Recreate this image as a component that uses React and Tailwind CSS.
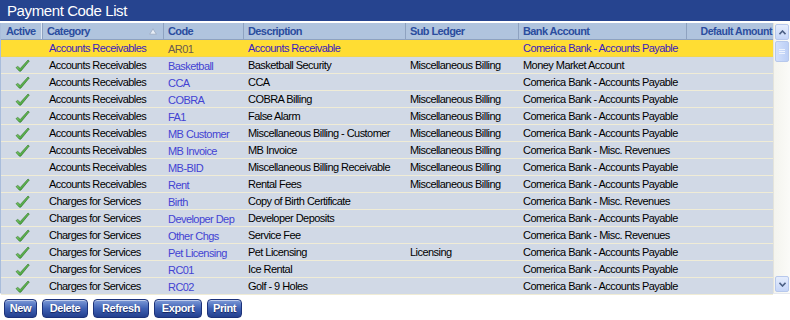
import React from "react";

const AR = "Accounts Receivables";
const CS = "Charges for Services";
const AP = "Comerica Bank - Accounts Payable";
const MR = "Comerica Bank - Misc. Revenues";
const MB = "Miscellaneous Billing";

const rows = [
  [false, AR, "AR01", "Accounts Receivable", "", AP],
  [true, AR, "Basketball", "Basketball Security", MB, "Money Market Account"],
  [true, AR, "CCA", "CCA", "", AP],
  [true, AR, "COBRA", "COBRA Billing", MB, AP],
  [true, AR, "FA1", "False Alarm", MB, AP],
  [true, AR, "MB Customer", "Miscellaneous Billing - Customer", MB, AP],
  [true, AR, "MB Invoice", "MB Invoice", MB, MR],
  [false, AR, "MB-BID", "Miscellaneous Billing Receivable", MB, AP],
  [true, AR, "Rent", "Rental Fees", MB, AP],
  [true, CS, "Birth", "Copy of Birth Certificate", "", MR],
  [true, CS, "Developer Dep", "Developer Deposits", "", AP],
  [true, CS, "Other Chgs", "Service Fee", "", MR],
  [true, CS, "Pet Licensing", "Pet Licensing", "Licensing", AP],
  [true, CS, "RC01", "Ice Rental", "", AP],
  [true, CS, "RC02", "Golf - 9 Holes", "", AP],
];

const cols = "grid-cols-[42px_121px_80px_162px_113px_168px_86px]";

function Check() {
  return (
    <svg width="15" height="13" viewBox="0 0 15 13">
      <defs>
        <linearGradient id="cg" x1="0" y1="0" x2="1" y2="1">
          <stop offset="0" stopColor="#a6e88a" />
          <stop offset="1" stopColor="#1f8a1f" />
        </linearGradient>
      </defs>
      <path
        d="M1 8.6 L2.8 7.4 L5.2 9.6 L13 1 L14.3 2 L5.8 12.2 L4.4 12.2 Z"
        fill="url(#cg)"
        stroke="#2d6e22"
        strokeWidth="0.6"
        strokeLinejoin="round"
      />
    </svg>
  );
}

function Btn({ children, w }) {
  return (
    <button
      className={`h-[19px] ${w} rounded-[4px] border border-[#1c327a] bg-gradient-to-b from-[#7e9ad8] via-[#3f61b4] to-[#233f8e] text-white font-bold text-[11px] tracking-[-0.4px] leading-none shadow-[inset_0_1px_0_rgba(255,255,255,0.5)] [text-shadow:0_1px_1px_rgba(0,0,40,0.6)]`}
      style={{ fontFamily: '"Liberation Sans", Arial, sans-serif' }}
    >
      {children}
    </button>
  );
}

export default function App() {
  return (
    <div
      className="w-[790px] h-[320px] bg-white text-[11px] tracking-[-0.55px] text-black"
      style={{ fontFamily: '"Liberation Sans", Arial, sans-serif' }}
    >
      <div className="h-[21px] bg-[#26448f] text-white text-[15px] tracking-[-0.4px] leading-[21px] pl-[7px]">
        Payment Code List
      </div>
      <div className="h-[2px] bg-white" />
      <div className="flex h-[270px] border-l border-[#a9bddb]">
        <div className="w-[772px] flex flex-col">
          <div className={`grid ${cols} h-[17px] bg-[#b0c4de] text-[#2b4d9e] font-bold tracking-[-0.6px] border-b border-[#8ea2c0]`}>
            <div className="pl-[5px] leading-[16px] border-r border-[#8ea2c0] shadow-[inset_-1px_0_0_#dfe8f3]">Active</div>
            <div className="pl-[4px] pr-[6px] leading-[16px] border-r border-[#8ea2c0] flex justify-between items-center">
              <span>Category</span>
              <svg width="8" height="7" viewBox="0 0 8 7">
                <path d="M4 0.8 L7.3 6.2 L0.7 6.2 Z" fill="#e8eef7" stroke="#9aa9c0" strokeWidth="0.8" />
              </svg>
            </div>
            <div className="pl-[4px] leading-[16px] border-r border-[#8ea2c0]">Code</div>
            <div className="pl-[4px] leading-[16px] border-r border-[#8ea2c0]">Description</div>
            <div className="pl-[4px] leading-[16px] border-r border-[#8ea2c0]">Sub Ledger</div>
            <div className="pl-[4px] leading-[16px] border-r border-[#8ea2c0]">Bank Account</div>
            <div className="leading-[16px] text-right whitespace-nowrap text-[10.5px] tracking-[-0.45px] pr-[1px]">Default Amount</div>
          </div>
          {rows.map((r, i) => {
            const sel = i === 0;
            return (
              <div
                key={i}
                className={`grid ${cols} h-[17px] leading-[16px] border-b ${
                  sel ? "bg-[#ffdd33] text-[#3a1cbf] border-[#f3d64a]" : "bg-[#d1d9e6] border-[#f0ecd6]"
                }`}
              >
                <div className="flex items-center justify-center pt-[1px]">{r[0] && <Check />}</div>
                <div className="pl-[6px] whitespace-nowrap overflow-hidden">{r[1]}</div>
                <div className={`pl-[4px] pt-[1px] whitespace-nowrap overflow-hidden ${sel ? "text-[#6b5a50]" : "text-[#4343d3]"}`}>{r[2]}</div>
                <div className="pl-[4px] whitespace-nowrap overflow-hidden">{r[3]}</div>
                <div className="pl-[4px] whitespace-nowrap overflow-hidden">{r[4]}</div>
                <div className="pl-[4px] whitespace-nowrap overflow-hidden">{r[5]}</div>
                <div />
              </div>
            );
          })}
        </div>
        <div className="w-[17px] flex flex-col bg-gradient-to-r from-[#f4f4ee] to-[#fbfbf8] border-l border-[#e4e4dc] pl-[1px] pr-[1px] pt-[1px]">
          <div className="h-[16px] rounded-[2px] border border-[#b7c8ec] bg-gradient-to-b from-[#e5edfd] to-[#c6d6f8] flex items-center justify-center">
            <svg width="7" height="5" viewBox="0 0 7 5"><path d="M0.5 4.2 L3.5 1 L6.5 4.2" fill="none" stroke="#4d6185" strokeWidth="1.6" /></svg>
          </div>
          <div className="h-[21px] mt-[1px] rounded-[2px] border border-[#b7c8ec] bg-gradient-to-r from-[#d3e0fb] to-[#bccff6] flex flex-col items-center justify-center gap-[1px]">
            <div className="w-[6px] h-[1px] bg-[#eef3fd]" />
            <div className="w-[6px] h-[1px] bg-[#eef3fd]" />
            <div className="w-[6px] h-[1px] bg-[#eef3fd]" />
          </div>
          <div className="flex-1" />
          <div className="h-[16px] mb-[1px] rounded-[2px] border border-[#b7c8ec] bg-gradient-to-b from-[#e5edfd] to-[#c6d6f8] flex items-center justify-center">
            <svg width="7" height="5" viewBox="0 0 7 5"><path d="M0.5 0.8 L3.5 4 L6.5 0.8" fill="none" stroke="#4d6185" strokeWidth="1.6" /></svg>
          </div>
        </div>
      </div>
      <div className="h-[1px] bg-[#e6e9ef]" />
      <div className="flex gap-[5px] pl-[4px] pt-[5px]">
        <Btn w="w-[33px]">New</Btn>
        <Btn w="w-[46px]">Delete</Btn>
        <Btn w="w-[56px]">Refresh</Btn>
        <Btn w="w-[48px]">Export</Btn>
        <Btn w="w-[35px]">Print</Btn>
      </div>
    </div>
  );
}
